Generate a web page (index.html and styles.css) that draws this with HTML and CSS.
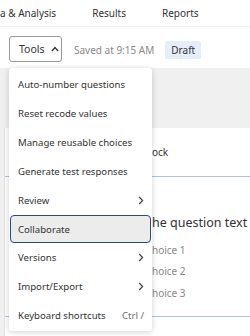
FILE: index.html
```html
<!DOCTYPE html>
<html lang="en">
<head>
    <meta charset="UTF-8">
    <title>Survey builder - Tools</title>
    <link rel="stylesheet" href="styles.css">
</head>
<body>

<div class="topnav">
    <span class="nav-item first">a &amp; Analysis</span>
    <span class="nav-item">Results</span>
    <span class="nav-item">Reports</span>
</div>

<div class="toolbar">
    <div class="tools-wrap">
        <button class="tools-btn">Tools
            <svg width="8" height="6" viewBox="0 0 8 6"><path d="M1 5 L4 1.6 L7 5" fill="none" stroke="#333" stroke-width="1.3"/></svg>
        </button>

        <ul class="menu">
            <li class="menu-item">Auto-number questions</li>
            <li class="menu-item">Reset recode values</li>
            <li class="menu-item">Manage reusable choices</li>
            <li class="menu-item">Generate test responses</li>
            <li class="menu-item">Review <svg class="chev" width="6" height="9" viewBox="0 0 6 9"><path d="M1.2 1 L4.6 4.5 L1.2 8" fill="none" stroke="#444" stroke-width="1.2"/></svg></li>
            <li class="menu-item focused">Collaborate</li>
            <li class="menu-item">Versions <svg class="chev" width="6" height="9" viewBox="0 0 6 9"><path d="M1.2 1 L4.6 4.5 L1.2 8" fill="none" stroke="#444" stroke-width="1.2"/></svg></li>
            <li class="menu-item">Import/Export <svg class="chev" width="6" height="9" viewBox="0 0 6 9"><path d="M1.2 1 L4.6 4.5 L1.2 8" fill="none" stroke="#444" stroke-width="1.2"/></svg></li>
            <li class="menu-item">Keyboard shortcuts <span class="shortcut">Ctrl /</span></li>
        </ul>
    </div>
    <span class="saved">Saved at 9:15 AM</span>
    <span class="badge">Draft</span>
</div>

<div class="canvas">
    <div class="card">
        <div class="block-head">ock</div>
        <div class="question">
            <div class="question-text">he question text</div>
            <div class="choice">hoice 1</div>
            <div class="choice">hoice 2</div>
            <div class="choice">hoice 3</div>
        </div>
    </div>
</div>

</body>
</html>
```

FILE: styles.css
```css
/* layout umum */
body {
    margin: 0;
    width: 250px;
    height: 336px;
    overflow: hidden;
    font-family: "Noto Sans", Arial, sans-serif;
    color: #333;
    background-color: #f0f0f0;
}
.topnav {
    background-color: #fff;
    height: 27px;
    display: flex;
    align-items: center;
    font-size: 10px;
    border-bottom: 1px solid #f2f2f2;
    box-sizing: border-box;
}
.nav-item {
    margin-left: 36px;
}
.nav-item.first {
    margin-left: 0;
}
.toolbar {
    background-color: #fff;
    height: 41px;
    display: flex;
    align-items: flex-start;
    padding: 9px 0 0 9px;
    box-sizing: border-box;
    font-size: 10px;
}
.tools-wrap {
    position: relative;
}
.tools-btn {
    width: 53px;
    height: 26px;
    display: flex;
    align-items: center;
    gap: 6px;
    padding: 0 0 0 9px;
    background: #fff;
    border: 1px solid #999;
    border-radius: 3px;
    font-family: inherit;
    font-size: 10.5px;
    color: #333;
}
.saved {
    margin: 5px 0 0 12px;
    height: 18px;
    display: flex;
    align-items: center;
    color: #888;
}
.badge {
    margin: 5px 0 0 11px;
    height: 18px;
    padding: 0 6px;
    display: flex;
    align-items: center;
    background-color: #e6eefa;
    border-radius: 2px;
}

/* dropdown tools */
.menu {
    position: absolute;
    top: 32px;
    left: 0;
    width: 143px;
    margin: 0;
    padding: 2px 0 1px;
    list-style: none;
    background-color: #fff;
    border-radius: 3px;
    box-shadow: 0 1px 6px rgba(0, 0, 0, 0.18);
    z-index: 2;
}
.menu-item {
    height: 29px;
    display: flex;
    align-items: center;
    justify-content: space-between;
    padding: 0 8px 0 9px;
    font-size: 9.6px;
    color: #333;
}
.menu-item.focused {
    margin: 0 1px;
    padding: 0 7px 0 7px;
    background-color: #ececec;
    border: 1.5px solid #2b4a7a;
    border-radius: 4px;
    height: 28px;
    box-sizing: border-box;
}
.shortcut {
    color: #6f6f6f;
}

/* area editor */
.canvas {
    padding-top: 60px;
}
.card {
    margin-left: 4px;
    height: 208px;
    background-color: #fff;
    border-left: 1px solid #e2e2e2;
}
.block-head {
    height: 49px;
    display: flex;
    align-items: center;
    padding-left: 147px;
    font-size: 10px;
    border-bottom: 1.5px solid #a9c4e6;
    box-sizing: border-box;
}
.question {
    height: 140px;
    padding: 37px 0 0 147px;
    box-sizing: border-box;
    border-bottom: 1.5px solid #a9c4e6;
    white-space: nowrap;
}
.question-text {
    font-size: 12.5px;
    color: #333;
    margin-bottom: 8px;
}
.choice {
    display: flex;
    align-items: center;
    height: 21.5px;
    font-size: 10px;
    color: #888;
}
```
